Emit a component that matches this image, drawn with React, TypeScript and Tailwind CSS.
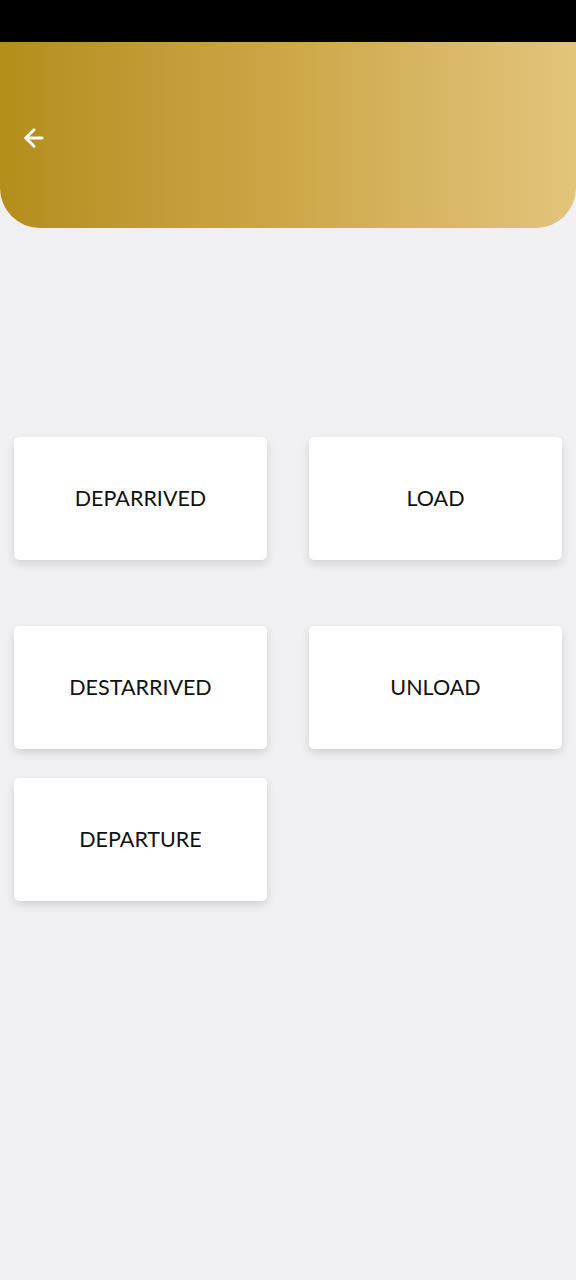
import { ArrowLeft } from "lucide-react";

const Card = ({ label }: { label: string }) => (
  <button className="h-[123px] w-[253px] rounded-[5px] bg-white shadow-[0_4px_8px_rgba(0,0,0,0.12)] flex items-center justify-center text-[21.5px] text-[#111]">
    {label}
  </button>
);

export default function App() {
  return (
    <div className="w-[576px] h-[1280px] bg-[#f0eff2] font-['Lato','Noto_Sans',sans-serif]">
      <div className="h-[42px] bg-black" />
      <div className="h-[186px] rounded-b-[40px] bg-gradient-to-r from-[#b38e1a] via-[#cda748] to-[#e3c47c] flex items-center px-[20px] pt-[6px]">
        <ArrowLeft className="text-white" size={28} strokeWidth={2.5} />
      </div>

      <div className="px-[14px] pt-[209px]">
        <div className="flex justify-between">
          <Card label="DEPARRIVED" />
          <Card label="LOAD" />
        </div>
        <div className="flex justify-between mt-[66px]">
          <Card label="DESTARRIVED" />
          <Card label="UNLOAD" />
        </div>
        <div className="flex mt-[29px]">
          <Card label="DEPARTURE" />
        </div>
      </div>
    </div>
  );
}
